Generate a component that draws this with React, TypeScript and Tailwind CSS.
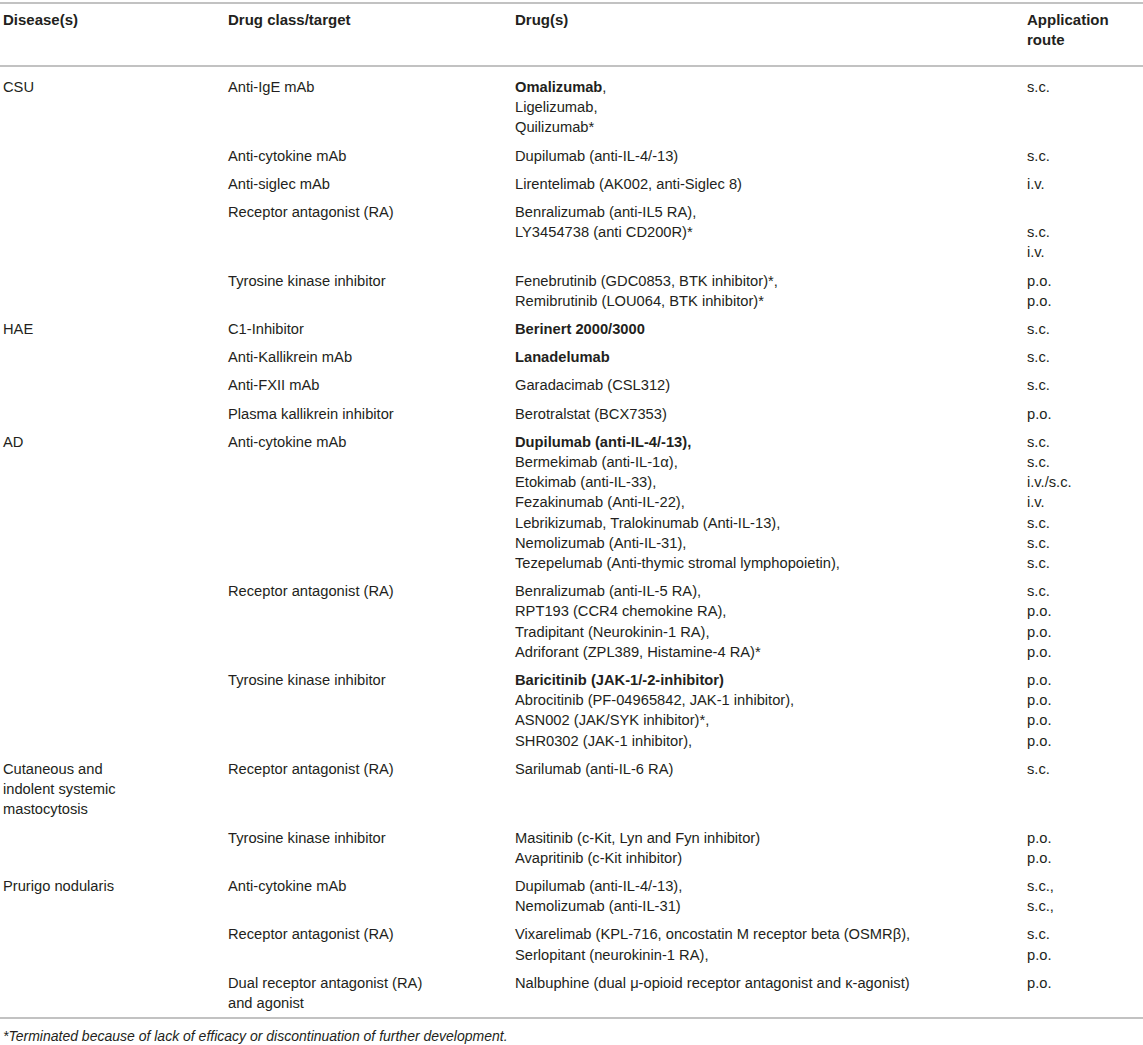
import type { ReactNode } from 'react'

type Row = {
  disease?: string[]
  cls: string[]
  drugs: ReactNode[]
  routes: string[]
}

const b = (t: string) => <span className="font-bold">{t}</span>

const rows: Row[] = [
  {
    disease: ['CSU'],
    cls: ['Anti-IgE mAb'],
    drugs: [<>{b('Omalizumab')},</>, 'Ligelizumab,', 'Quilizumab*'],
    routes: ['s.c.'],
  },
  { cls: ['Anti-cytokine mAb'], drugs: ['Dupilumab (anti-IL-4/-13)'], routes: ['s.c.'] },
  { cls: ['Anti-siglec mAb'], drugs: ['Lirentelimab (AK002, anti-Siglec 8)'], routes: ['i.v.'] },
  {
    cls: ['Receptor antagonist (RA)'],
    drugs: ['Benralizumab (anti-IL5 RA),', 'LY3454738 (anti CD200R)*'],
    routes: ['', 's.c.', 'i.v.'],
  },
  {
    cls: ['Tyrosine kinase inhibitor'],
    drugs: ['Fenebrutinib (GDC0853, BTK inhibitor)*,', 'Remibrutinib (LOU064, BTK inhibitor)*'],
    routes: ['p.o.', 'p.o.'],
  },
  { disease: ['HAE'], cls: ['C1-Inhibitor'], drugs: [b('Berinert 2000/3000')], routes: ['s.c.'] },
  { cls: ['Anti-Kallikrein mAb'], drugs: [b('Lanadelumab')], routes: ['s.c.'] },
  { cls: ['Anti-FXII mAb'], drugs: ['Garadacimab (CSL312)'], routes: ['s.c.'] },
  { cls: ['Plasma kallikrein inhibitor'], drugs: ['Berotralstat (BCX7353)'], routes: ['p.o.'] },
  {
    disease: ['AD'],
    cls: ['Anti-cytokine mAb'],
    drugs: [
      b('Dupilumab (anti-IL-4/-13),'),
      'Bermekimab (anti-IL-1α),',
      'Etokimab (anti-IL-33),',
      'Fezakinumab (Anti-IL-22),',
      'Lebrikizumab, Tralokinumab (Anti-IL-13),',
      'Nemolizumab (Anti-IL-31),',
      'Tezepelumab (Anti-thymic stromal lymphopoietin),',
    ],
    routes: ['s.c.', 's.c.', 'i.v./s.c.', 'i.v.', 's.c.', 's.c.', 's.c.'],
  },
  {
    cls: ['Receptor antagonist (RA)'],
    drugs: [
      'Benralizumab (anti-IL-5 RA),',
      'RPT193 (CCR4 chemokine RA),',
      'Tradipitant (Neurokinin-1 RA),',
      'Adriforant (ZPL389, Histamine-4 RA)*',
    ],
    routes: ['s.c.', 'p.o.', 'p.o.', 'p.o.'],
  },
  {
    cls: ['Tyrosine kinase inhibitor'],
    drugs: [
      b('Baricitinib (JAK-1/-2-inhibitor)'),
      'Abrocitinib (PF-04965842, JAK-1 inhibitor),',
      'ASN002 (JAK/SYK inhibitor)*,',
      'SHR0302 (JAK-1 inhibitor),',
    ],
    routes: ['p.o.', 'p.o.', 'p.o.', 'p.o.'],
  },
  {
    disease: ['Cutaneous and', 'indolent systemic', 'mastocytosis'],
    cls: ['Receptor antagonist (RA)'],
    drugs: ['Sarilumab (anti-IL-6 RA)'],
    routes: ['s.c.'],
  },
  {
    cls: ['Tyrosine kinase inhibitor'],
    drugs: ['Masitinib (c-Kit, Lyn and Fyn inhibitor)', 'Avapritinib (c-Kit inhibitor)'],
    routes: ['p.o.', 'p.o.'],
  },
  {
    disease: ['Prurigo nodularis'],
    cls: ['Anti-cytokine mAb'],
    drugs: ['Dupilumab (anti-IL-4/-13),', 'Nemolizumab (anti-IL-31)'],
    routes: ['s.c.,', 's.c.,'],
  },
  {
    cls: ['Receptor antagonist (RA)'],
    drugs: ['Vixarelimab (KPL-716, oncostatin M receptor beta (OSMRβ),', 'Serlopitant (neurokinin-1 RA),'],
    routes: ['s.c.', 'p.o.'],
  },
  {
    cls: ['Dual receptor antagonist (RA)', 'and agonist'],
    drugs: ['Nalbuphine (dual μ-opioid receptor antagonist and κ-agonist)'],
    routes: ['p.o.'],
  },
]

function Lines({ items }: { items: ReactNode[] }) {
  return (
    <div>
      {items.map((t, i) => (
        <div key={i} className="whitespace-nowrap">
          {t === '' ? '\u00a0' : t}
        </div>
      ))}
    </div>
  )
}

export default function App() {
  return (
    <div className="w-[1143px] h-[1045px] bg-white pt-[2px] text-[#231f20] font-['Liberation_Sans',Arial,sans-serif]">
      <div className="border-t-[2px] border-b-[2px] border-[#c2c2c2]">
        <div className="grid grid-cols-[225px_287px_512px_1fr] pl-[3px] pt-[6px] pb-[15px] text-[15px] leading-[20px] font-bold border-b-[2px] border-[#c2c2c2]">
          <div>Disease(s)</div>
          <div>Drug class/target</div>
          <div>Drug(s)</div>
          <div>
            Application
            <br />
            route
          </div>
        </div>
        <div className="pt-[6px] text-[14.7px] leading-[20.2px]">
          {rows.map((r, i) => (
            <div key={i} className="grid grid-cols-[225px_287px_512px_1fr] pl-[3px] py-[4px]">
              <Lines items={r.disease ?? []} />
              <Lines items={r.cls} />
              <Lines items={r.drugs} />
              <Lines items={r.routes} />
            </div>
          ))}
        </div>
      </div>
      <p className="pl-[3px] pt-[8px] text-[14px] leading-[18px] italic">
        *Terminated because of lack of efficacy or discontinuation of further development.
      </p>
    </div>
  )
}
